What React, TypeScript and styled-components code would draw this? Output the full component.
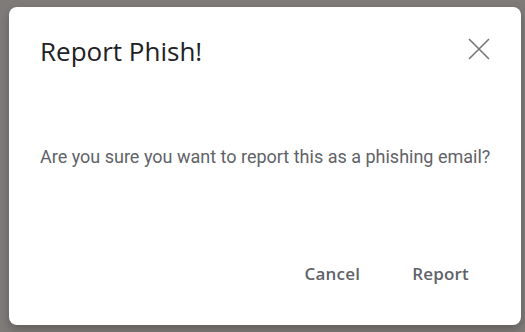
import styled, { createGlobalStyle } from 'styled-components';

const GlobalStyle = createGlobalStyle`
  html, body {
    margin: 0;
    padding: 0;
  }
  body {
    background: #7f7b79;
    font-family: Roboto, "Liberation Sans", Arial, sans-serif;
  }
`;

const Backdrop = styled.div`
  width: 525px;
  height: 332px;
  box-sizing: border-box;
  padding: 7px 4px 7px 9px;
  display: flex;
  background: #7f7b79;
  overflow: hidden;
`;

const Dialog = styled.div`
  flex: 1;
  display: flex;
  flex-direction: column;
  background: #ffffff;
  border-radius: 8px;
  box-shadow: 0 4px 10px rgba(0, 0, 0, 0.25);
`;

const Header = styled.div`
  display: flex;
  align-items: flex-start;
  justify-content: space-between;
  padding: 28px 30px 0 31px;
`;

const Title = styled.h2`
  margin: 0;
  font-family: "Open Sans", Roboto, sans-serif;
  font-size: 26px;
  line-height: 32px;
  font-weight: 400;
  color: #202124;
`;

const CloseButton = styled.button`
  width: 24px;
  height: 24px;
  margin-top: 2px;
  padding: 0;
  border: 0;
  background: transparent;
  display: flex;
  align-items: center;
  justify-content: center;
  cursor: pointer;
`;

const Message = styled.p`
  margin: 0;
  padding: 77px 16px 0 31px;
  font-size: 18px;
  line-height: 26px;
  color: #5f6368;
  white-space: nowrap;
  flex: 1;
`;

const Actions = styled.div`
  display: flex;
  justify-content: flex-end;
  gap: 4px;
  padding: 0 28px 34px 0;
`;

const ActionButton = styled.button`
  height: 36px;
  padding: 0 24px;
  border: 0;
  background: transparent;
  font-family: "Open Sans", Roboto, sans-serif;
  font-size: 17px;
  font-weight: 600;
  letter-spacing: 0.2px;
  color: #5f6368;
  border-radius: 4px;
  cursor: pointer;
`;

function CloseIcon() {
  return (
    <svg width="22" height="22" viewBox="0 0 22 22" fill="none">
      <path d="M1 1 L21 21 M21 1 L1 21" stroke="#757575" strokeWidth="1.6" />
    </svg>
  );
}

export default function App() {
  return (
    <>
      <GlobalStyle />
      <Backdrop>
        <Dialog>
          <Header>
            <Title>Report Phish!</Title>
            <CloseButton aria-label="Close">
              <CloseIcon />
            </CloseButton>
          </Header>
          <Message>Are you sure you want to report this as a phishing email?</Message>
          <Actions>
            <ActionButton>Cancel</ActionButton>
            <ActionButton>Report</ActionButton>
          </Actions>
        </Dialog>
      </Backdrop>
    </>
  );
}
